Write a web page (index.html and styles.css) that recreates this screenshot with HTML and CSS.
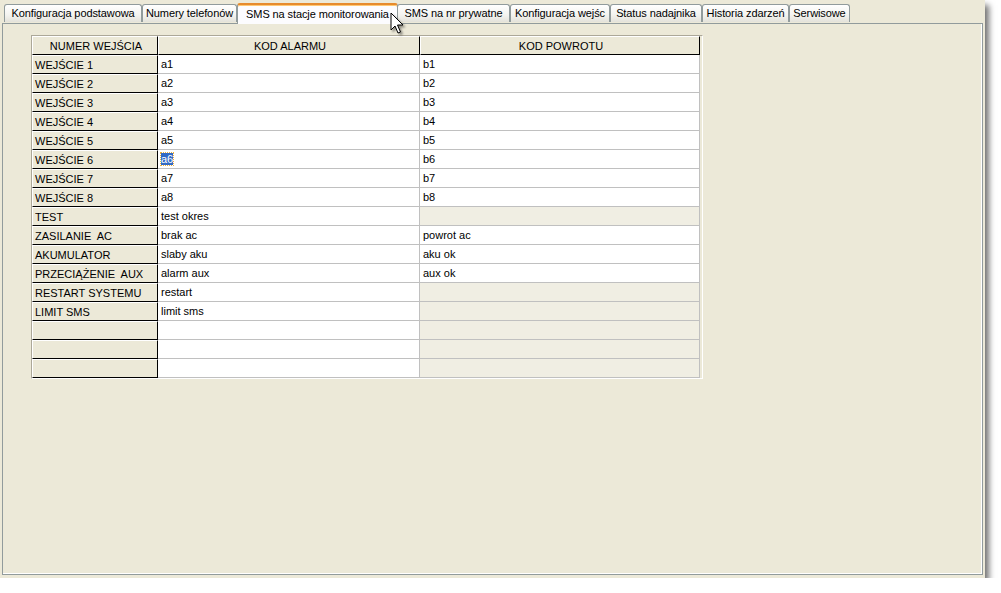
FILE: index.html
```html
<!DOCTYPE html>
<html>
<head>
<meta charset="utf-8">
<link rel="stylesheet" href="styles.css">
</head>
<body>
<div class="window">
  <div class="tabs">
    <div class="tab t1">Konfiguracja podstawowa</div>
    <div class="tab t2">Numery telefonów</div>
    <div class="tab t3 active">SMS na stacje monitorowania</div>
    <div class="tab t4">SMS na nr prywatne</div>
    <div class="tab t5">Konfiguracja wejśc</div>
    <div class="tab t6">Status nadajnika</div>
    <div class="tab t7">Historia zdarzeń</div>
    <div class="tab t8">Serwisowe</div>
  </div>
  <div class="panel">
    <div class="grid-frame">
      <table class="grid">
        <colgroup><col class="c1"><col class="c2"><col class="c3"></colgroup>
        <thead>
          <tr><th class="hdr">NUMER WEJŚCIA</th><th class="hdr">KOD ALARMU</th><th class="hdr">KOD POWROTU</th></tr>
        </thead>
        <tbody>
          <tr><th>WEJŚCIE 1</th><td>a1</td><td>b1</td></tr>
          <tr><th>WEJŚCIE 2</th><td>a2</td><td>b2</td></tr>
          <tr><th>WEJŚCIE 3</th><td>a3</td><td>b3</td></tr>
          <tr><th>WEJŚCIE 4</th><td>a4</td><td>b4</td></tr>
          <tr><th>WEJŚCIE 5</th><td>a5</td><td>b5</td></tr>
          <tr><th>WEJŚCIE 6</th><td><span class="sel">a6</span></td><td>b6</td></tr>
          <tr><th>WEJŚCIE 7</th><td>a7</td><td>b7</td></tr>
          <tr><th>WEJŚCIE 8</th><td>a8</td><td>b8</td></tr>
          <tr><th>TEST</th><td>test okres</td><td class="ro"></td></tr>
          <tr><th>ZASILANIE  AC</th><td>brak ac</td><td>powrot ac</td></tr>
          <tr><th>AKUMULATOR</th><td>slaby aku</td><td>aku ok</td></tr>
          <tr><th>PRZECIĄŻENIE  AUX</th><td>alarm aux</td><td>aux ok</td></tr>
          <tr><th>RESTART SYSTEMU</th><td>restart</td><td class="ro"></td></tr>
          <tr><th>LIMIT SMS</th><td>limit sms</td><td class="ro"></td></tr>
          <tr><th></th><td></td><td class="ro"></td></tr>
          <tr><th></th><td></td><td class="ro"></td></tr>
          <tr><th></th><td></td><td class="ro"></td></tr>
        </tbody>
      </table>
    </div>
  </div>
  <svg class="cursor" width="14" height="24" viewBox="0 0 14 24">
    <path d="M1 1 L1 18 L5 14 L8 21 L10.5 20 L7.5 13 L13 13 Z" fill="#fff" stroke="#000" stroke-width="1" stroke-linejoin="miter"/>
  </svg>
</div>
</body>
</html>
```
FILE: styles.css
```css
html, body {
  margin: 0;
  padding: 0;
  background: #ffffff;
}
body {
  font-family: "Liberation Sans", Arial, sans-serif;
  font-size: 11px;
  color: #000;
}
.window {
  position: relative;
  width: 985px;
  height: 578px;
  box-sizing: border-box;
  background: #ECE9D8;
  padding: 2px 2px 3px 2px;
  display: flex;
  flex-direction: column;
  box-shadow: 4px 5px 6px rgba(0,0,0,0.55);
}
.tabs {
  display: flex;
  align-items: flex-end;
  height: 21px;
  padding-left: 2px;
  position: relative;
  z-index: 2;
}
.tab {
  box-sizing: border-box;
  flex: none;
  height: 18px;
  line-height: 17px;
  padding: 0;
  text-align: center;
  overflow: hidden;
  border: 1px solid #919B9C;
  border-bottom: none;
  border-radius: 3px 3px 0 0;
  background: linear-gradient(#FFFFFF, #F3F3EF 60%, #E3E2DA);
  margin-bottom: 1px;
  white-space: nowrap;
  letter-spacing: -0.1px;
}
.t1 { width: 138px; }
.t2 { width: 95px; }
.t3 { width: 161px; }
.t4 { width: 113px; }
.t5 { width: 100px; }
.t6 { width: 92px; }
.t7 { width: 87px; }
.t8 { width: 61px; }
.tab.active {
  height: 21px;
  line-height: 18px;
  margin-bottom: -1px;
  background: #FCFCFE;
  border-top: 2px solid #E68B2C;
  box-shadow: inset 0 1px 0 #FFC873;
  margin-right: -1px;
}
.panel {
  flex: 1;
  border: 1px solid #919B9C;
  background: #ECE9D8;
  box-shadow: inset -1px -1px 0 #fff;
  padding: 11px 0 0 28px;
}
.grid-frame {
  display: inline-block;
  border-top: 1px solid #ACA899;
  border-left: 1px solid #ACA899;
  border-right: 1px solid #fff;
  border-bottom: 1px solid #fff;
  padding-right: 2px;
  background: #ECE9D8;
}
.grid {
  border-collapse: separate;
  border-spacing: 0;
  table-layout: fixed;
  width: 668px;
  background: #fff;
}
.c1 { width: 126px; }
.c2 { width: 262px; }
.c3 { width: 280px; }
.grid th, .grid td {
  padding: 0 0 0 2px;
  font-weight: normal;
  text-align: left;
  white-space: pre;
  box-sizing: border-box;
  overflow: hidden;
  vertical-align: middle;
}
.grid th {
  background: #ECE9D8;
  border-top: 1px solid #fff;
  border-left: 1px solid #fff;
  border-right: 1px solid #000;
  border-bottom: 1px solid #000;
  height: 19px;
}
.grid th.hdr {
  text-align: center;
}
.grid td {
  height: 19px;
  border-right: 1px solid #C0C0C0;
  border-bottom: 1px solid #C0C0C0;
  padding-left: 3px;
}
.grid td.ro {
  background: #F0EEE3;
}
.sel {
  background: #316AC5;
  color: #fff;
  outline: 1px dotted #E8B040;
}
.cursor {
  position: absolute;
  left: 390px;
  top: 12px;
  z-index: 5;
  filter: drop-shadow(2px 2px 1px rgba(0,0,0,0.4));
}
```
